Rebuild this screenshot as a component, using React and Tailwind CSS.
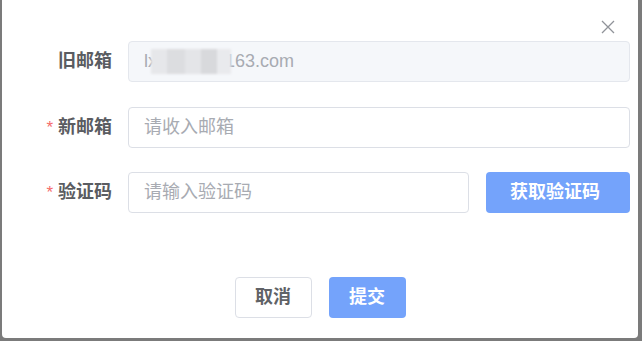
import React from "react";

const FONT = { fontFamily: '"Liberation Sans", "Noto Sans CJK SC", sans-serif' };

function Label({ text, required }) {
  return (
    <div className="w-[110px] shrink-0 flex items-center justify-end text-[18px] font-bold text-[#5a5c61]">
      {required && <span className="text-[#f56c6c] text-[17px] mr-[5px] font-normal">*</span>}
      <span>{text}</span>
    </div>
  );
}

export default function App() {
  return (
    <div className="w-[642px] h-[341px] bg-[#7b7b7b] overflow-hidden" style={FONT}>
      <div className="relative ml-[2px] w-[636px] h-[338px] bg-white rounded-b-[4px]">
        {/* close */}
        <button className="absolute top-[20px] left-[599px] w-[14px] h-[14px] text-[#909399]">
          <svg viewBox="0 0 14 14" width="14" height="14" fill="none" stroke="currentColor" strokeWidth="1.3">
            <path d="M1 1 L13 13 M13 1 L1 13" />
          </svg>
        </button>

        <div className="pt-[41px] pr-[8px] flex flex-col">
          {/* old email */}
          <div className="flex items-center h-[41px]">
            <Label text="旧邮箱" />
            <div className="ml-[16px] flex-1 h-[41px] rounded-[4px] border border-[#e4e7ed] bg-[#f5f7fa] flex items-center pl-[15px] text-[18px] text-[#a8abb2]">
              <span>lx</span>
              <span className="relative inline-flex h-[25px] w-[80px] -ml-[6px] blur-[1px]">
                <span className="w-[16px] h-full bg-[#e6e7ea]" />
                <span className="w-[18px] h-full bg-[#dcdde0]" />
                <span className="w-[16px] h-full bg-[#e4e5e8]" />
                <span className="w-[16px] h-full bg-[#d8d9dc]" />
                <span className="w-[14px] h-full bg-[#e9eaed]" />
              </span>
              <span className="-ml-[6px]">163.com</span>
            </div>
          </div>

          {/* new email */}
          <div className="mt-[25px] flex items-center h-[41px]">
            <Label text="新邮箱" required />
            <div className="ml-[16px] flex-1 h-[41px] rounded-[4px] border border-[#dcdfe6] bg-white flex items-center pl-[15px] text-[18px] text-[#a8abb2]">
              请收入邮箱
            </div>
          </div>

          {/* code */}
          <div className="mt-[24px] flex items-center h-[41px]">
            <Label text="验证码" required />
            <div className="ml-[16px] w-[341px] h-[41px] rounded-[4px] border border-[#dcdfe6] bg-white flex items-center pl-[15px] text-[18px] text-[#a8abb2]">
              请输入验证码
            </div>
            <button className="ml-[17px] flex-1 h-[41px] rounded-[4px] bg-[#74a3fb] text-white text-[18px] font-bold flex items-center justify-center pr-[6px]">
              获取验证码
            </button>
          </div>
        </div>

        {/* footer */}
        <div className="mt-[64px] flex justify-center gap-[17px]">
          <button className="w-[77px] h-[41px] rounded-[4px] border border-[#dcdfe6] bg-white text-[18px] font-bold text-[#606266]">
            取消
          </button>
          <button className="w-[77px] h-[41px] rounded-[4px] bg-[#74a3fb] text-white text-[18px] font-bold">
            提交
          </button>
        </div>
      </div>
    </div>
  );
}
